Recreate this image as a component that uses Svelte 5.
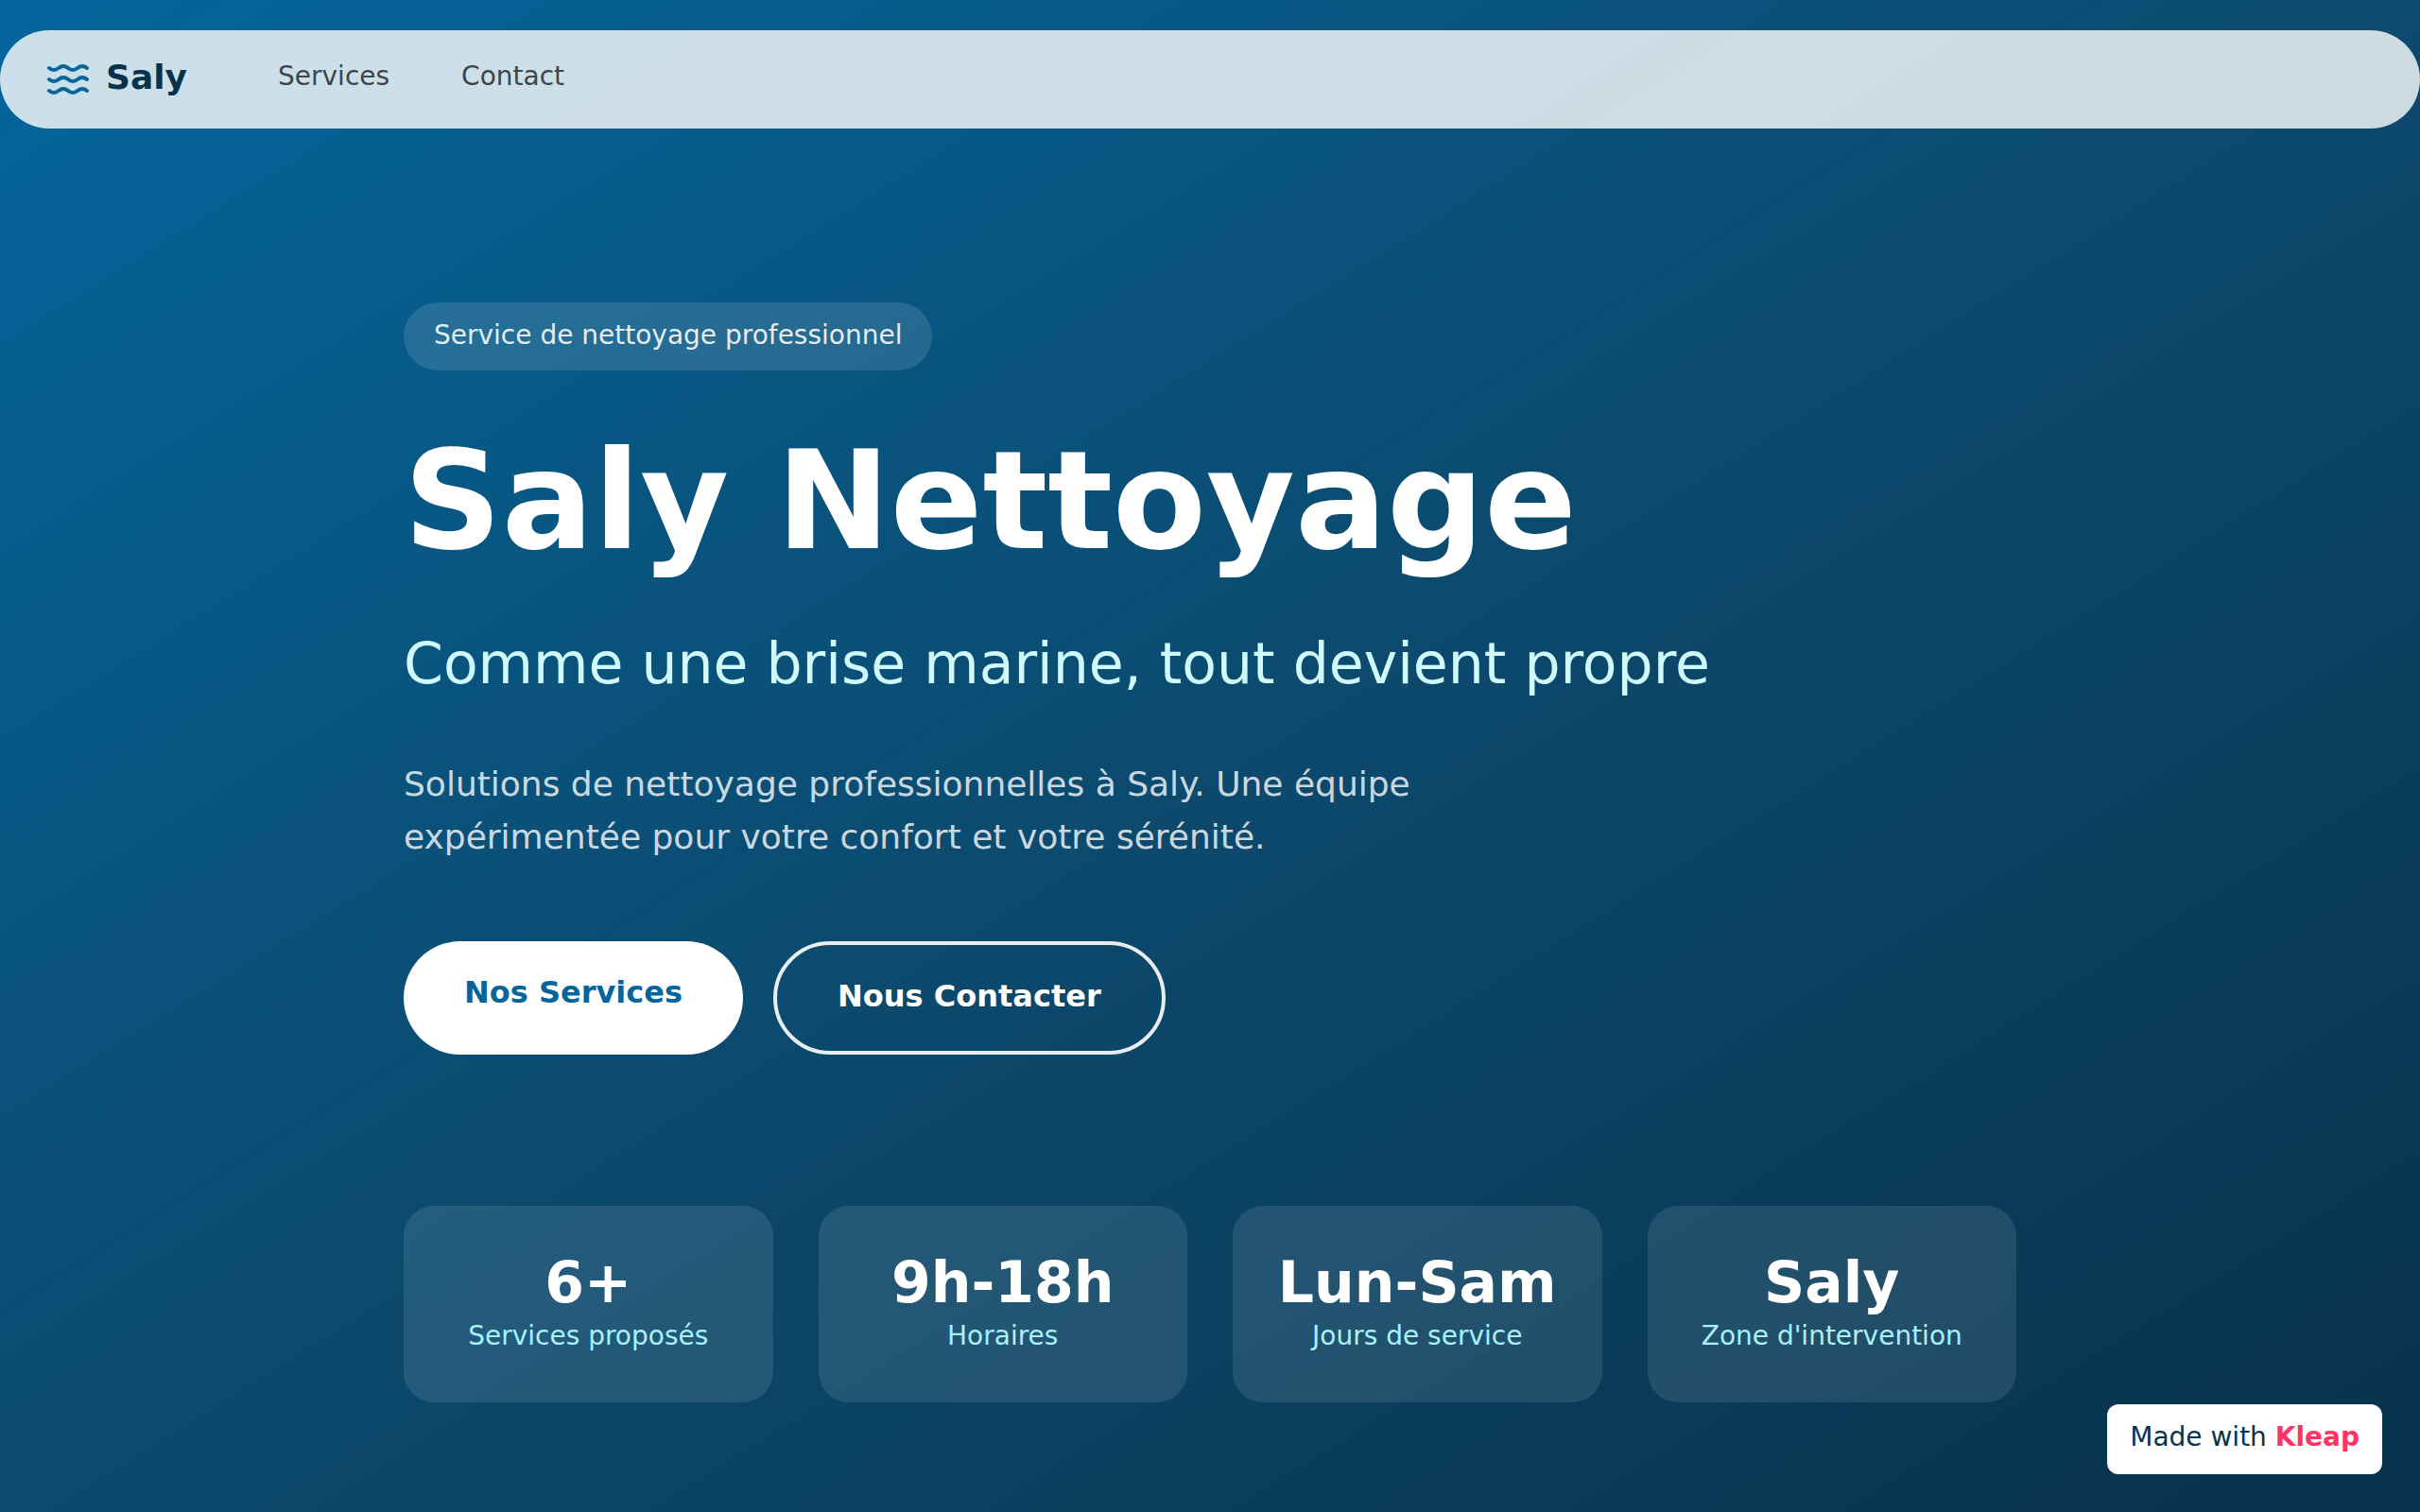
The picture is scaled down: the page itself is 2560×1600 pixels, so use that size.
<script>
  const links = [
    { label: "Services", href: "#services" },
    { label: "Contact", href: "#contact" },
  ];

  const stats = [
    { value: "6+", label: "Services proposés" },
    { value: "9h-18h", label: "Horaires" },
    { value: "Lun-Sam", label: "Jours de service" },
    { value: "Saly", label: "Zone d'intervention" },
  ];
</script>

<div class="page">
  <header class="navbar">
    <a class="logo" href="#top">
      <!-- Waves icon -->
      <svg viewBox="0 0 24 24" aria-hidden="true">
        <path d="M2 6c.6.5 1.2 1 2.5 1C7 7 7 5 9.5 5c2.6 0 2.4 2 5 2 2.5 0 2.5-2 5-2 1.3 0 1.9.5 2.5 1" />
        <path d="M2 12c.6.5 1.2 1 2.5 1 2.5 0 2.5-2 5-2 2.6 0 2.4 2 5 2 2.5 0 2.5-2 5-2 1.3 0 1.9.5 2.5 1" />
        <path d="M2 18c.6.5 1.2 1 2.5 1 2.5 0 2.5-2 5-2 2.6 0 2.4 2 5 2 2.5 0 2.5-2 5-2 1.3 0 1.9.5 2.5 1" />
      </svg>
      <span>Saly</span>
    </a>
    <nav>
      {#each links as link}
        <a href={link.href}>{link.label}</a>
      {/each}
    </nav>
  </header>

  <main class="hero" id="top">
    <span class="tag">Service de nettoyage professionnel</span>
    <h1>Saly Nettoyage</h1>
    <p class="tagline">Comme une brise marine, tout devient propre</p>
    <p class="intro">
      Solutions de nettoyage professionnelles à Saly. Une équipe expérimentée
      pour votre confort et votre sérénité.
    </p>

    <div class="actions">
      <a class="btn primary" href="#services">Nos Services</a>
      <a class="btn outline" href="#contact">Nous Contacter</a>
    </div>

    <div class="stats">
      {#each stats as stat}
        <div class="stat">
          <div class="value">{stat.value}</div>
          <div class="label">{stat.label}</div>
        </div>
      {/each}
    </div>
  </main>

  <a class="made-with" href="#kleap">Made with <strong>Kleap</strong></a>
</div>

<style>
  :global(body) {
    margin: 0;
  }

  .page {
    box-sizing: border-box;
    min-height: 100vh;
    padding-top: 32px;
    background: linear-gradient(to bottom right, #03669d, #0c4a6e, #08314b);
    color: #fff;
    font-family: "DejaVu Sans", sans-serif;
    font-size: 28px;
    line-height: 40px;
  }

  a {
    color: inherit;
    text-decoration: none;
  }

  /* Top bar */
  .navbar {
    display: flex;
    align-items: center;
    gap: 96px;
    box-sizing: border-box;
    height: 104px;
    padding: 0 48px;
    border-radius: 52px;
    background: rgba(255, 255, 255, 0.8);
  }

  .logo {
    display: flex;
    align-items: center;
    gap: 16px;
    color: #08334d;
    font-size: 36px;
    font-weight: 700;
  }

  .logo span {
    padding-bottom: 4px;
  }

  .logo svg {
    width: 48px;
    height: 48px;
    fill: none;
    stroke: #03659b;
    stroke-width: 2;
    stroke-linecap: round;
    stroke-linejoin: round;
  }

  nav {
    display: flex;
    gap: 76px;
    padding-bottom: 6px;
    color: #404548;
  }

  /* Hero */
  .hero {
    max-width: 1706px;
    margin: 0 auto;
    padding: 184px 48px 116px;
  }

  .tag {
    display: inline-block;
    padding: 15px 32px 17px;
    border-radius: 36px;
    background: rgba(255, 255, 255, 0.12);
    color: rgba(255, 255, 255, 0.9);
  }

  h1 {
    margin: 64px 0 0;
    font-size: 144px;
    font-weight: 700;
    line-height: 148px;
  }

  .tagline {
    margin: 60px 0 0;
    color: #cffafe;
    font-size: 60px;
    line-height: 76px;
  }

  .intro {
    max-width: 1152px;
    margin: 62px 0 0;
    color: rgba(255, 255, 255, 0.8);
    font-size: 36px;
    line-height: 56px;
  }

  .actions {
    display: flex;
    gap: 32px;
    margin-top: 82px;
  }

  .btn {
    padding: 32px 64px 36px;
    border-radius: 60px;
    font-size: 32px;
    font-weight: 600;
    line-height: 44px;
  }

  .primary {
    background: #fff;
    color: #03659b;
  }

  .outline {
    border: 4px solid rgba(255, 255, 255, 0.9);
  }

  .stats {
    display: grid;
    grid-template-columns: repeat(4, 1fr);
    gap: 48px;
    margin-top: 160px;
  }

  .stat {
    padding: 44px 32px 50px;
    border-radius: 32px;
    background: rgba(255, 255, 255, 0.1);
    text-align: center;
  }

  .value {
    font-size: 60px;
    font-weight: 700;
    line-height: 74px;
  }

  .label {
    color: #a5f3fc;
  }

  /* Sticky badge over the page corner */
  .made-with {
    position: fixed;
    right: 40px;
    bottom: 40px;
    padding: 15px 24px 19px;
    border-radius: 12px;
    background: #fff;
    color: #08334d;
  }

  .made-with strong {
    color: #ff3366;
    font-weight: 700;
  }
</style>
